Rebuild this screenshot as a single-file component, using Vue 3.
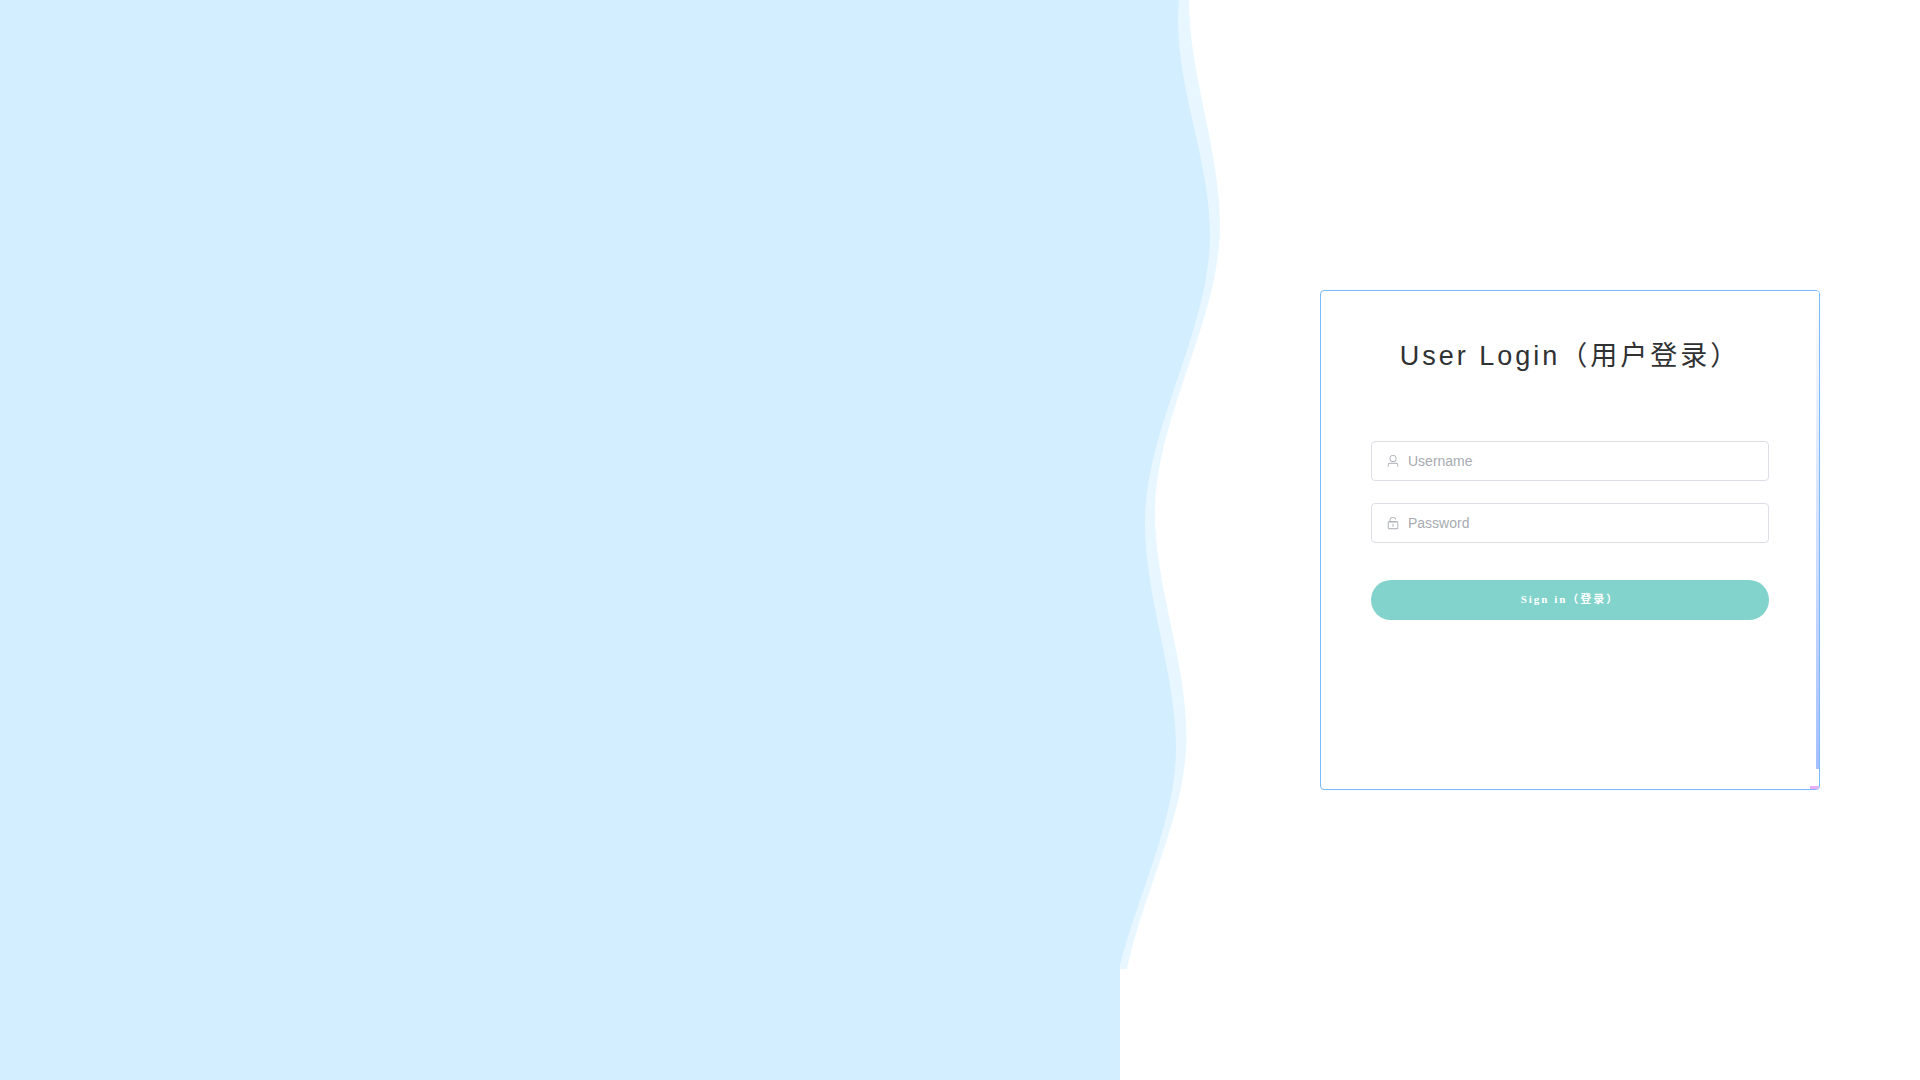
<script setup>
import { ref } from 'vue'

const username = ref('')
const password = ref('')
</script>

<template>
  <div class="page">
    <div class="side"></div>
    <svg class="wave" viewBox="0 0 100 969" preserveAspectRatio="none" aria-hidden="true">
      <path
        class="wave-back"
        d="M0 0H69C69 75 100 150 100 225C100 321 35 417 35 513C35 587 66.500 661 66.500 737C66.500 831 1 927 1 1023H0Z"
      />
      <path
        class="wave-front"
        d="M0 -268H123C123 -172 58 -76 58 20C58 92 90 163 90 235C90 331 25 427 25 523C25 598 56 673 56 748C56 844 -10 940 -10 1036H0Z"
      />
    </svg>

    <main class="content">
      <form class="card" @submit.prevent>
        <h1 class="title">User Login（用户登录）</h1>

        <label class="field">
          <svg class="icon" viewBox="0 0 1024 1024" aria-hidden="true">
            <path
              d="M512 512a192 192 0 1 0 0-384 192 192 0 0 0 0 384m0 64a256 256 0 1 1 0-512 256 256 0 0 1 0 512m320 320v-96a96 96 0 0 0-96-96H288a96 96 0 0 0-96 96v96a32 32 0 1 1-64 0v-96a160 160 0 0 1 160-160h448a160 160 0 0 1 160 160v96a32 32 0 1 1-64 0"
            />
          </svg>
          <input v-model="username" class="input" type="text" placeholder="Username" aria-label="Username" />
        </label>

        <label class="field">
          <svg class="icon" viewBox="0 0 1024 1024" aria-hidden="true">
            <path
              d="M224 448a32 32 0 0 0-32 32v384a32 32 0 0 0 32 32h576a32 32 0 0 0 32-32V480a32 32 0 0 0-32-32zm0-64h576a96 96 0 0 1 96 96v384a96 96 0 0 1-96 96H224a96 96 0 0 1-96-96V480a96 96 0 0 1 96-96"
            />
            <path
              d="M512 544a32 32 0 0 1 32 32v192a32 32 0 1 1-64 0V576a32 32 0 0 1 32-32m178.304-295.296A192.064 192.064 0 0 0 320 320v64h352l96 38.4V448H256V320a256 256 0 0 1 495.488-76.8z"
            />
          </svg>
          <input v-model="password" class="input" type="password" placeholder="Password" aria-label="Password" />
        </label>

        <button class="submit" type="submit">Sign in（登录）</button>

        <span class="trace trace-right"></span>
        <span class="trace trace-bottom"></span>
      </form>
    </main>
  </div>
</template>

<style>
body {
  margin: 0;
}
</style>

<style scoped>
.page {
  display: flex;
  align-items: flex-start;
  height: 100vh;
  min-height: 540px;
  background: #fff;
  font-family: "Liberation Sans", "Noto Sans CJK SC", sans-serif;
}

.side {
  flex: none;
  width: 58.3333%;
  height: 100%;
  background: #d3eeff;
}

.wave {
  flex: none;
  width: 100px;
  height: 89.7222%;
}

.wave-back {
  fill: #e8f7ff;
}

.wave-front {
  fill: #d3eeff;
}

.content {
  display: flex;
  flex: 1;
  align-items: center;
  justify-content: center;
  height: 100%;
}

.card {
  position: relative;
  box-sizing: border-box;
  width: 500px;
  min-height: 500px;
  padding: 45px 50px;
  overflow: hidden;
  border: 1px solid #79bbff;
  border-radius: 4px;
}

.title {
  margin: 0 0 65px;
  color: #303133;
  font-size: 27px;
  font-weight: 400;
  line-height: 40px;
  letter-spacing: 3px;
  text-align: center;
  white-space: nowrap;
}

.field {
  display: flex;
  align-items: center;
  gap: 8px;
  box-sizing: border-box;
  height: 40px;
  margin-bottom: 22px;
  padding: 0 14px;
  border: 1px solid #dcdfe6;
  border-radius: 4px;
  cursor: text;
}

.icon {
  flex: none;
  width: 14px;
  height: 14px;
  fill: #a8abb2;
}

.input {
  flex: 1;
  min-width: 0;
  height: 38px;
  padding: 0;
  border: 0;
  outline: 0;
  background: none;
  color: #606266;
  font-family: inherit;
  font-size: 14px;
}

.input::placeholder {
  color: #a8abb2;
}

.submit {
  display: block;
  width: 100%;
  height: 40px;
  margin-top: 37px;
  padding: 0 0 4px;
  border: 0;
  border-radius: 20px;
  background: #81d3cb;
  color: #fff;
  font-family: "Liberation Serif", "Noto Sans CJK SC", serif;
  font-size: 11px;
  font-weight: 700;
  letter-spacing: 2px;
  cursor: pointer;
}

.trace {
  position: absolute;
  right: 0;
}

.trace-right {
  top: 0;
  bottom: 20px;
  width: 3px;
  background: linear-gradient(#fff, #a5bfff);
}

.trace-bottom {
  bottom: 0;
  width: 9px;
  height: 3px;
  background: #e9adf3;
}
</style>
